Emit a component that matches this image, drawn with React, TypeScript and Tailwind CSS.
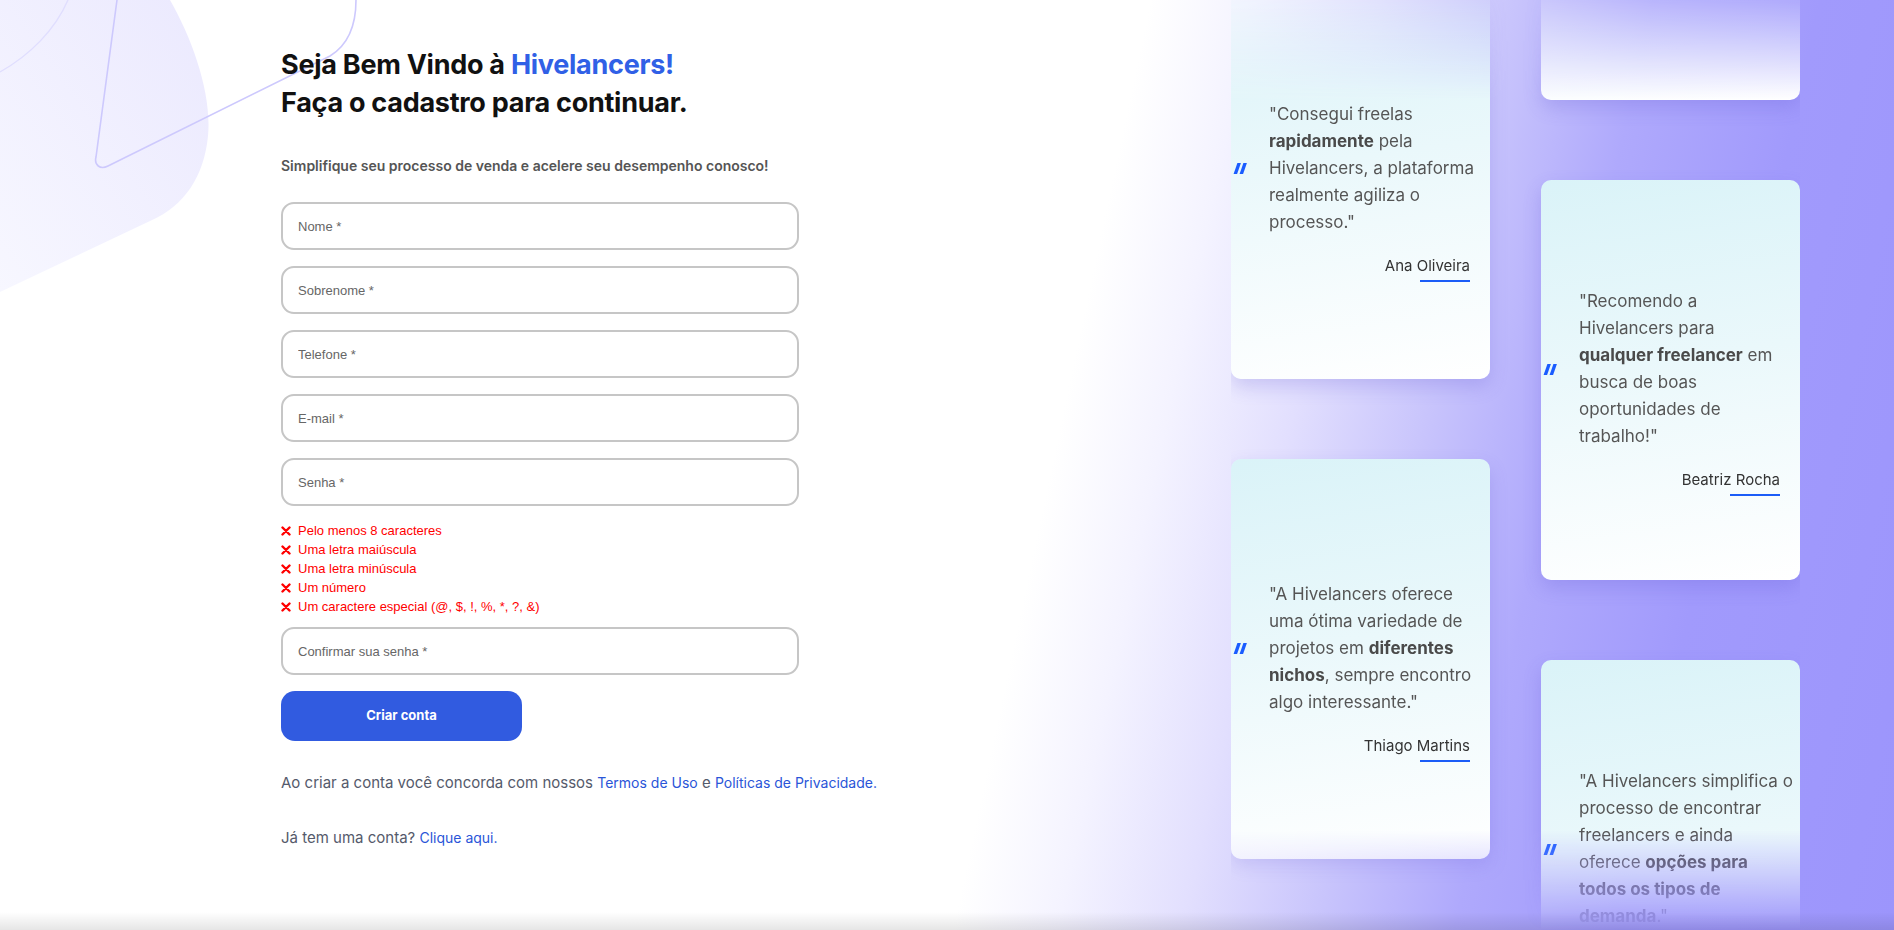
import React from "react";

type Part = { text: string; bold?: boolean };

type Testimonial = {
  lines: Part[][];
  author: string;
};

const column1: Testimonial[] = [
  {
    lines: [
      [{ text: '"Consegui freelas' }],
      [{ text: "rapidamente", bold: true }, { text: " pela" }],
      [{ text: "Hivelancers, a plataforma" }],
      [{ text: "realmente agiliza o" }],
      [{ text: 'processo."' }],
    ],
    author: "Ana Oliveira",
  },
  {
    lines: [
      [{ text: '"A Hivelancers oferece' }],
      [{ text: "uma ótima variedade de" }],
      [{ text: "projetos em " }, { text: "diferentes", bold: true }],
      [{ text: "nichos", bold: true }, { text: ", sempre encontro" }],
      [{ text: 'algo interessante."' }],
    ],
    author: "Thiago Martins",
  },
  {
    lines: [
      [{ text: '"Consegui freelas' }],
      [{ text: "rapidamente", bold: true }, { text: " pela" }],
      [{ text: "Hivelancers, a plataforma" }],
      [{ text: "realmente agiliza o" }],
      [{ text: 'processo."' }],
    ],
    author: "Ana Oliveira",
  },
];

const column2: Testimonial[] = [
  {
    lines: [
      [{ text: '"Encontrei clientes de' }],
      [{ text: "confiança", bold: true }, { text: " e projetos" }],
      [{ text: "bem pagos logo na" }],
      [{ text: 'primeira semana."' }],
    ],
    author: "Lucas Ferreira",
  },
  {
    lines: [
      [{ text: '"Recomendo a' }],
      [{ text: "Hivelancers para" }],
      [{ text: "qualquer freelancer", bold: true }, { text: " em" }],
      [{ text: "busca de boas" }],
      [{ text: "oportunidades de" }],
      [{ text: 'trabalho!"' }],
    ],
    author: "Beatriz Rocha",
  },
  {
    lines: [
      [{ text: '"A Hivelancers simplifica o' }],
      [{ text: "processo de encontrar" }],
      [{ text: "freelancers e ainda" }],
      [{ text: "oferece " }, { text: "opções para", bold: true }],
      [{ text: "todos os tipos de", bold: true }],
      [{ text: "demanda", bold: true }, { text: '."' }],
    ],
    author: "Carla Mendes",
  },
];

const fields = ["Nome *", "Sobrenome *", "Telefone *", "E-mail *", "Senha *"];

const rules = [
  "Pelo menos 8 caracteres",
  "Uma letra maiúscula",
  "Uma letra minúscula",
  "Um número",
  "Um caractere especial (@, $, !, %, *, ?, &)",
];

function QuoteMark() {
  return (
    <svg width="14" height="11" viewBox="0 0 14 11" className="shrink-0">
      <polygon points="4.4,0 7.9,0 4.1,11 0.6,11" fill="#1a5cff" />
      <polygon points="10.4,0 13.9,0 10.1,11 6.6,11" fill="#1a5cff" />
    </svg>
  );
}

function Card({ item }: { item: Testimonial }) {
  return (
    <div className="w-[259px] h-[400px] shrink-0 rounded-[10px] bg-[linear-gradient(172deg,#daf3f8_0%,#eaf8fb_45%,#ffffff_100%)] shadow-[0_8px_18px_rgba(90,80,210,0.22)] flex flex-col justify-center pt-[24px] pl-[2px] pr-[20px]">
      <div className="flex items-center gap-[22px]">
        <QuoteMark />
        <div className="text-[17px] leading-[27px] text-[#555] whitespace-nowrap">
          {item.lines.map((line, i) => (
            <div key={i}>
              {line.map((p, j) =>
                p.bold ? (
                  <strong key={j} className="font-bold text-[#4a4a4a]">
                    {p.text}
                  </strong>
                ) : (
                  <span key={j}>{p.text}</span>
                )
              )}
            </div>
          ))}
        </div>
      </div>
      <div className="mt-[18px] text-right text-[15px] leading-[24px] text-[#333]">
        {item.author}
      </div>
      <div className="ml-auto mt-[2px] w-[50px] h-[2px] bg-[#1b5cf7]" />
    </div>
  );
}

function XIcon() {
  return (
    <svg width="10" height="10" viewBox="0 0 10 10" className="shrink-0">
      <path d="M1.5 1.5 L8.5 8.5 M8.5 1.5 L1.5 8.5" stroke="#f00" strokeWidth="2.4" strokeLinecap="round" />
    </svg>
  );
}

function Field({ placeholder }: { placeholder: string }) {
  return (
    <input
      type="text"
      placeholder={placeholder}
      className="w-[518px] h-[48px] rounded-[13px] border-2 border-[#c6c6c6] bg-white px-[15px] font-['Liberation_Sans',Arial,sans-serif] text-[13px] text-[#333] placeholder:text-[#666] outline-none"
    />
  );
}

export default function App() {
  return (
    <div className="relative w-full h-[930px] overflow-hidden font-['Inter',sans-serif] bg-[linear-gradient(102deg,#ffffff_0%,#ffffff_55%,#f4f3ff_60%,#e2dffe_66%,#c8c4fc_72.5%,#afa9fc_79%,#a19afc_87%,#9c95fc_100%)]">
      {/* decorative blob, top left */}
      <svg
        className="absolute top-0 left-0 pointer-events-none"
        width="380"
        height="300"
        viewBox="0 0 380 300"
      >
        <defs>
          <linearGradient id="blob" x1="1" y1="0" x2="0" y2="1">
            <stop offset="0" stopColor="#ebe9fe" />
            <stop offset="1" stopColor="#f7f7ff" />
          </linearGradient>
        </defs>
        <path
          d="M0 0 L170 0 C193 40 212 95 208 136 C204 176 185 206 150 221 L0 292 Z"
          fill="url(#blob)"
        />
        <path
          d="M356 0 C356 25 348 45 330 56 L108 166 C100 170 94 165 96 157 L117 0"
          fill="none"
          stroke="#cdc9fd"
          strokeWidth="1.6"
        />
        <path d="M0 72 C30 55 55 30 68 0" fill="none" stroke="#e0defe" strokeWidth="1.4" />
      </svg>

      <div className="relative flex items-start h-full">
        {/* form */}
        <div className="w-[1231px] shrink-0 pl-[281px] pt-[46px]">
          <h1 className="text-[27px] leading-[38px] tracking-[-0.01em] font-bold text-[#111]">
            Seja Bem Vindo à <span className="text-[#3060e6]">Hivelancers!</span>
            <br />
            Faça o cadastro para continuar.
          </h1>
          <p className="mt-[34px] text-[14px] leading-[20px] font-semibold text-[#555]">
            Simplifique seu processo de venda e acelere seu desempenho conosco!
          </p>

          <div className="mt-[26px] flex flex-col gap-[16px]">
            {fields.map((f) => (
              <Field key={f} placeholder={f} />
            ))}
          </div>

          <ul className="mt-[15px] flex flex-col font-['Liberation_Sans',Arial,sans-serif] text-[13px] leading-[19px] text-[#f00]">
            {rules.map((r) => (
              <li key={r} className="flex items-center gap-[7px]">
                <XIcon />
                {r}
              </li>
            ))}
          </ul>

          <div className="mt-[11px]">
            <Field placeholder="Confirmar sua senha *" />
          </div>

          <button className="mt-[16px] w-[241px] h-[50px] rounded-[14px] bg-[#315be0] text-white text-[13px] font-bold">
            Criar conta
          </button>

          <p className="mt-[32px] text-[15px] leading-[20px] text-[#555a6b]">
            Ao criar a conta você concorda com nossos{" "}
            <a className="text-[14px] text-[#2a55d8]">Termos de Uso</a> e{" "}
            <a className="text-[14px] text-[#2a55d8]">Políticas de Privacidade.</a>
          </p>
          <p className="mt-[35px] text-[15px] leading-[20px] text-[#555a6b]">
            Já tem uma conta? <a className="text-[14px] text-[#2a55d8]">Clique aqui.</a>
          </p>
        </div>

        {/* testimonials */}
        <div className="flex items-start gap-[51px] h-full [mask-image:linear-gradient(to_bottom,rgba(0,0,0,0.15)_0px,black_100px,black_830px,transparent_930px)]">
          <div className="flex flex-col gap-[80px] mt-[-21px]">
            {column1.map((t, i) => (
              <Card key={i} item={t} />
            ))}
          </div>
          <div className="flex flex-col gap-[80px] mt-[-300px]">
            {column2.map((t, i) => (
              <Card key={i} item={t} />
            ))}
          </div>
        </div>
      </div>

      <div className="absolute bottom-0 left-0 right-0 h-[18px] bg-gradient-to-b from-transparent to-black/10 pointer-events-none" />
    </div>
  );
}
